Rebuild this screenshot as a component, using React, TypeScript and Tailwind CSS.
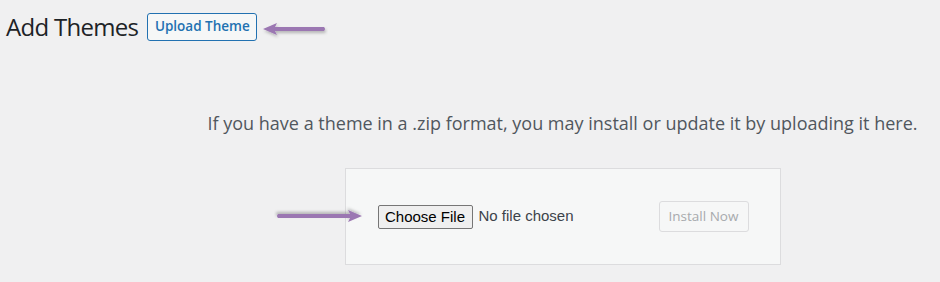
import React from "react";

function Arrow({ width, className }: { width: number; className?: string }) {
  // points left; tip at x=2
  return (
    <svg width={width} height={20} viewBox={`0 0 ${width} 20`} className={className}>
      <defs>
        <filter id={`sh${width}`} x="-20%" y="-60%" width="140%" height="220%">
          <feDropShadow dx="1" dy="2" stdDeviation="1.5" floodColor="#000" floodOpacity="0.25" />
        </filter>
      </defs>
      <g filter={`url(#sh${width})`}>
        <path d={`M13 8 L${width - 4} 8 Q${width - 2} 10 ${width - 4} 12 L13 12 Z`} fill="#9b77b2" />
        <path d="M2 10 L16 4 L13 10 L16 16 Z" fill="#9b77b2" />
      </g>
    </svg>
  );
}

export default function App() {
  return (
    <div className="relative w-[940px] h-[282px] overflow-hidden bg-[#f0f0f1] font-['Open_Sans',sans-serif]">
      <div className="flex items-center pl-[6px] pt-[13px] h-[41px]">
        <h1 className="text-[24px] leading-[28px] font-normal text-[#1d2327] tracking-[-0.7px]">Add Themes</h1>
        <button className="ml-[9px] h-[28px] w-[110px] rounded-[3px] border border-[#2271b1] bg-[#f6f7f7] text-[13.5px] font-semibold text-[#2271b1] leading-none">
          Upload Theme
        </button>
        <Arrow width={67} className="ml-[4px] mt-[4px]" />
      </div>

      <div className="flex flex-col items-center pl-[185px]">
        <p className="mt-[70px] text-[18px] leading-[24px] text-[#50575e] whitespace-nowrap">
          If you have a theme in a .zip format, you may install or update it by uploading it here.
        </p>
        <div className="relative mt-[33px] flex h-[97px] w-[436px] items-center justify-between border border-[#dcdcde] bg-[#f6f7f7] pl-[32px] pr-[31px]">
          <div className="flex items-center">
            <button className="h-[24px] w-[95px] rounded-[2px] border border-[#767676] bg-[#efefef] font-['Liberation_Sans',sans-serif] text-[15px] leading-none text-black">
              Choose File
            </button>
            <span className="ml-[6px] font-['Liberation_Sans',sans-serif] text-[15px] text-[#3c434a]">No file chosen</span>
          </div>
          <button className="h-[31px] w-[90px] rounded-[3px] border border-[#dcdcde] bg-[#f6f7f7] text-[13.5px] text-[#a7aaad] leading-none">
            Install Now
          </button>
          <div className="absolute left-[-72px] top-[37px] rotate-180">
            <Arrow width={90} />
          </div>
        </div>
      </div>
    </div>
  );
}
